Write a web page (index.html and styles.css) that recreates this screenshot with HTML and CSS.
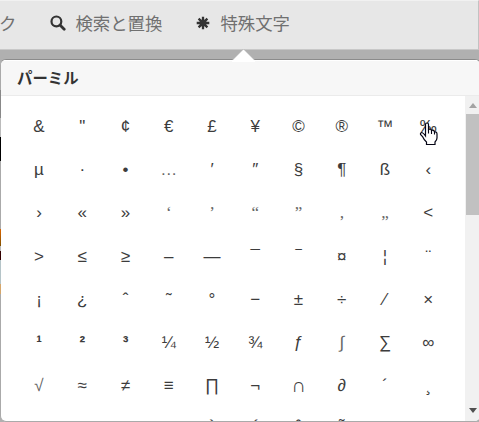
FILE: index.html
```html
<!DOCTYPE html>
<html lang="ja">
<head>
<meta charset="utf-8">
<title>特殊文字</title>
<link rel="stylesheet" href="styles.css">
</head>
<body>
<div class="toolbar">
  <span class="tool tool-cut">ク</span>
  <span class="tool tool-search"><svg class="icon" viewBox="0 0 16 16"><circle cx="6.4" cy="6.4" r="4.9" fill="none" stroke="#333" stroke-width="2.2"/><path d="M10 10l4.2 4.2" stroke="#333" stroke-width="2.8" stroke-linecap="round"/></svg>検索と置換</span>
  <span class="tool tool-chars"><svg class="icon star" viewBox="0 0 14 14"><path d="M7 .7v12.6M.7 7h12.6M2.6 2.6l8.800 8.800M11.400 2.600l-8.800 8.800" stroke="#333" stroke-width="2.3"/><circle cx="7" cy="7" r="3.4" fill="#333"/></svg>特殊文字</span>
</div>
<div class="stage">
  <div class="backdrop"><i class="s1"></i><i class="s2"></i><i class="s3"></i><i class="s4"></i><i class="s5"></i><i class="s6"></i><i class="s7"></i><i class="s8"></i></div>
  <div class="popup">
    <div class="title">パーミル</div>
    <div class="body">
      <div class="grid">
        <span>&amp;</span><span>"</span><span>¢</span><span>€</span><span>£</span><span>¥</span><span>©</span><span>®</span><span>™</span><span>‰</span>
        <span>µ</span><span>·</span><span>•</span><span class="light">…</span><span>′</span><span>″</span><span>§</span><span>¶</span><span>ß</span><span>‹</span>
        <span>›</span><span>«</span><span>»</span><span class="quote">‘</span><span class="quote">’</span><span class="quote">“</span><span class="quote">”</span><span class="quote">‚</span><span class="quote">„</span><span>&lt;</span>
        <span>&gt;</span><span>≤</span><span>≥</span><span>–</span><span>—</span><span>¯</span><span>‾</span><span>¤</span><span>¦</span><span>¨</span>
        <span>¡</span><span>¿</span><span>ˆ</span><span>˜</span><span>°</span><span>−</span><span>±</span><span>÷</span><span>⁄</span><span>×</span>
        <span class="sup">¹</span><span class="sup">²</span><span class="sup">³</span><span>¼</span><span>½</span><span>¾</span><span>ƒ</span><span class="light">∫</span><span>∑</span><span>∞</span>
        <span class="light">√</span><span>≈</span><span>≠</span><span>≡</span><span>∏</span><span>¬</span><span class="cap">∩</span><span>∂</span><span>´</span><span>¸</span>
        <span></span><span></span><span></span><span></span><span>À</span><span>Á</span><span>Â</span><span>Ã</span>
      </div>
      <div class="scrollbar"><b class="up"></b><b class="thumb"></b><b class="down"></b></div>
    </div>
  </div>
  <svg class="arrow" viewBox="0 0 24 14"><path d="M0 12.5L11.5 1 23 12.5V14H0z" fill="#fff"/><path d="M.5 12L11.5 1l11 11" fill="none" stroke="#aaa" stroke-width=".6"/></svg>
  <svg class="cursor" viewBox="0 0 19 24"><path d="M6.5 14V2.500Q6.500 1 8 1t1.500 1.500V7.500Q12 6.500 12.500 8.500 15 7.500 15.500 10 18 9.500 18 12v4q0 2-2 4v2.500H7.500V20Q5 18 3.500 14.500L1.500 12.500Q1 11 2.500 10.500 4 10.500 6.500 14z" fill="#fff" stroke="#050515" stroke-width="1.2"/><path d="M9.500 7.500v4M12.500 8.500v3.500M15.500 10v2.500" stroke="#050515" stroke-width="1.100"/></svg>
</div>
</body>
</html>
```
FILE: styles.css
```css
* { box-sizing: border-box; }
html, body { height: 100%; }
body {
  margin: 0;
  overflow: hidden;
  background: #b0b0b0;
  font-family: "Liberation Sans", "Noto Sans CJK JP", sans-serif;
  color: #3c3c3c;
}
.toolbar {
  display: flex;
  height: 50px;
  background: #e7e7e7;
  border-top: 1px solid #f1f1f1;
  border-right: 1px solid #c2c2c2;
  border-bottom: 1px solid #c8c8c8;
  font-family: "Noto Sans CJK JP", sans-serif;
  font-size: 17.4px;
  line-height: 44px;
  color: #707070;
}
.tool { display: flex; align-items: center; height: 44px; white-space: nowrap; }
.tool-cut { margin-left: -1px; }
.tool-search { margin-left: 34px; }
.tool-chars { margin-left: 34px; }
.icon { width: 16px; height: 16px; margin-right: 9px; }
.star { width: 14px; height: 14px; margin-right: 10px; }
.stage { position: relative; height: 372px; padding-top: 9px; }
.popup {
  width: 481px;
  height: 363px;
  background: #fff;
  border: 1px solid #999;
  border-color: #8b8b8b #aaa #aaa;
  border-radius: 6px;
  overflow: hidden;
}
.title {
  height: 36px;
  padding-left: 16px;
  background: #f7f7f7;
  border-top: 1px solid #fff;
  border-bottom: 1px solid #ebebeb;
  color: #333;
  font: bold 15.4px/33px "Noto Sans CJK JP", sans-serif;
}
.body { display: flex; height: 325px; }
.grid {
  display: grid;
  flex: 1;
  grid-template-columns: repeat(10, 43.25px);
  grid-auto-rows: 43.2px;
  padding: 9px 0 0 16.4px;
  overflow: hidden;
  font-size: 17px;
  line-height: 43px;
  text-align: center;
}
.quote { font-family: "Liberation Serif", serif; color: #666; }
.light { color: #666; }
.sup { font-weight: bold; }
.cap { font-size: 20px; }
.scrollbar {
  display: flex;
  flex-direction: column;
  align-items: center;
  width: 15px;
  background: #f1f1f1;
}
.up { margin-top: 7px; border: 4px solid transparent; border-top: 0; border-bottom: 5px solid #a3a3a3; }
.thumb { width: 13px; height: 101px; margin-top: 6px; background: #c1c1c1; }
.down { margin-top: auto; margin-bottom: 8px; border: 4px solid transparent; border-bottom: 0; border-top: 5px solid #505050; }
.arrow { position: absolute; left: 232px; top: -2px; width: 24px; height: 14px; }
.cursor { position: absolute; left: 419px; top: 72px; width: 19px; height: 24px; }
.backdrop { position: absolute; left: 0; top: 40px; width: 1px; z-index: 1; }
.backdrop i { display: block; width: 1px; }
.s1 { height: 28px; background: #888; }
.s2 { height: 19px; background: #bbb; }
.s3 { height: 24px; background: #000; }
.s4 { height: 68px; background: #aaa; }
.s5 { height: 17px; background: linear-gradient(#dc6500, #805000); }
.s6 { height: 14px; background: linear-gradient(#bbb 35%, #300 36%); }
.s7 { height: 24px; background: #b5c4c8; }
.s8 { height: 10px; background: #d5a66b; }
```
